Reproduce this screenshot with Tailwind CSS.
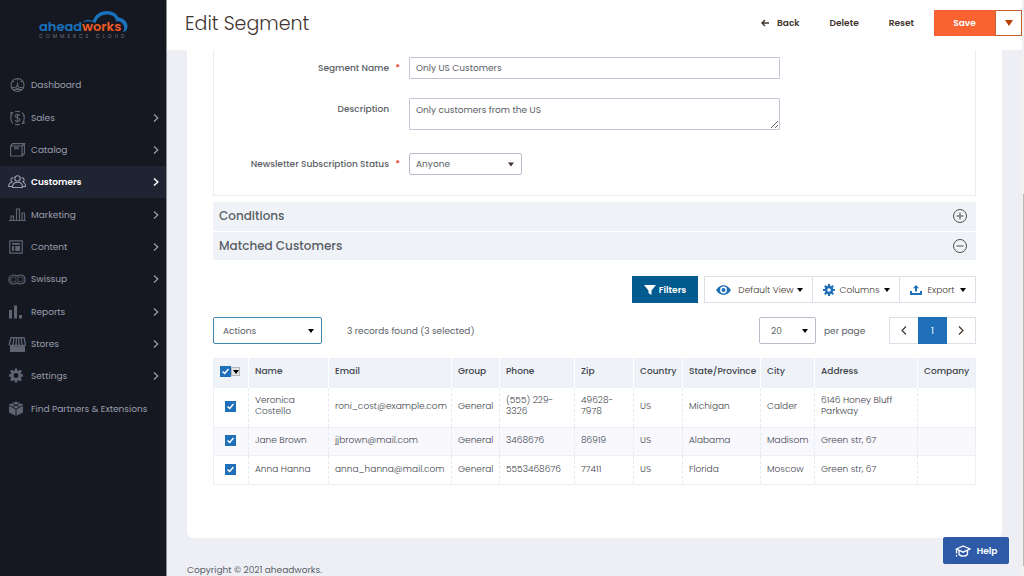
<!DOCTYPE html>
<html lang="en">

<head>
    <meta charset="UTF-8">
    <meta name="viewport" content="width=device-width, initial-scale=1.0">
    <title>Edit Segment</title>
    <script src="https://cdn.jsdelivr.net/npm/@tailwindcss/browser@4"></script>
</head>

<body class="bg-[#eeeff5] font-['Poppins','Inter',sans-serif] text-[9px] leading-[12px] text-[#5a5e66]">
    <div class="flex h-screen overflow-hidden">

        <!-- Sidebar -->
        <aside class="w-[167px] shrink-0 border-r border-[#8b8d94] bg-[#151820] text-[#9a9eae]">
            <a href="#" class="relative block h-[69px] pl-[39px] pt-[20px]" aria-label="aheadworks commerce cloud">
                <svg class="absolute left-[82px] top-[10px]" width="46" height="24" viewBox="0 0 46 24" fill="#1a72bd">
                    <path d="M1 12C3 9.500 8 9.500 11 11C13 4 19 1 25 1C31 1 35 4 36.500 7.500C41.500 8 45.500 12 45.500 16C45.500 19 43.500 22 41 22C43.500 18 42 13 37.500 11.500C36.500 11 35.500 11 34 11.500C34 7 30 4.500 25 4.500C19 4.500 15 8 13.500 13C10 11 5 10.800 1 12Z" />
                </svg>
                <span class="block text-[13px] leading-[14px] font-semibold text-[#1a72bd]">ahead<span class="text-[#ee5a24]">works</span></span>
                <span class="block text-[5px] leading-[6px] tracking-[3px] text-[#6b7180]">COMMERCE CLOUD</span>
            </a>
            <nav class="grid h-[356px] auto-rows-fr">
                <a href="#" class="flex items-center gap-[5px] pl-[8px] pr-[7px]">
                    <svg class="w-[18px]" width="18" height="16" viewBox="0 0 18 16" fill="none" stroke="#5f6473" stroke-width="1.200">
                        <circle cx="9.500" cy="8" r="6.500" />
                        <path d="M3.500 10.500H7M12 10.500H15.500M9.500 2V3.500M5 4L6 5M14 4L13 5M9.500 5.500V9" />
                        <circle cx="9.500" cy="10.500" r="1.600" />
                        <path d="M5 12.500H14" />
                    </svg>
                    <span class="flex-1">Dashboard</span>
                </a>
                <a href="#" class="flex items-center gap-[5px] pl-[8px] pr-[7px]">
                    <svg class="w-[18px]" width="18" height="16" viewBox="0 0 18 16" fill="none" stroke="#5f6473" stroke-width="1.200">
                        <path d="M5 2.500C2 5 2 11 5 13.500M14 2.500C17 5 17 11 14 13.500M7 1.800C8.500 1.200 10.500 1.200 12 1.800M7 14.200C8.500 14.800 10.500 14.800 12 14.200" />
                        <path d="M12 5.500C11 4.300 7.200 4.300 7.200 6.300C7.200 8.500 12 7.500 12 9.700C12 11.700 8 11.700 7 10.300M9.500 3.500V12.500" />
                        <path d="M3 4.500V2.500H5M16 11.500V13.500H14" />
                    </svg>
                    <span class="flex-1">Sales</span>
                    <svg width="6" height="8" viewBox="0 0 6 8" fill="none" stroke="currentColor" stroke-width="1.200"><path d="M1 0.500L4.800 4L1 7.500" /></svg>
                </a>
                <a href="#" class="flex items-center gap-[5px] pl-[8px] pr-[7px]">
                    <svg class="w-[18px]" width="18" height="16" viewBox="0 0 18 16" fill="none" stroke="#5f6473" stroke-width="1.200">
                        <path d="M2.600 4H14V14H2.600ZM2.600 4L4.500 1.700H16.400L14 4M16.400 1.700V11.500L14 14" />
                        <path d="M7 4V7L8.500 6L10 7V4" />
                    </svg>
                    <span class="flex-1">Catalog</span>
                    <svg width="6" height="8" viewBox="0 0 6 8" fill="none" stroke="currentColor" stroke-width="1.200"><path d="M1 0.500L4.800 4L1 7.500" /></svg>
                </a>
                <a href="#" class="flex items-center gap-[5px] bg-[#1f2432] pl-[8px] pr-[7px] font-semibold text-white" aria-current="page">
                    <svg class="w-[18px]" width="18" height="16" viewBox="0 0 18 16" fill="none" stroke="#9a9eae" stroke-width="1.100">
                        <circle cx="9.500" cy="4.500" r="2.700" />
                        <path d="M4.500 13.500C4.500 9.500 6 8.300 9.500 8.300C13 8.300 14.500 9.500 14.500 13.500Z" />
                        <path d="M5.500 4C3.500 3.500 2.500 5 3 6.500C3.200 7.300 3.800 7.800 4.500 8M13.500 4C15.500 3.500 16.500 5 16 6.500C15.800 7.300 15.200 7.800 14.500 8" />
                        <path d="M4.500 12.500H0.700C0.700 10 1.500 8.500 4 8.500M14.500 12.500H17.600C17.600 10 17 8.500 15 8.500" />
                    </svg>
                    <span class="flex-1">Customers</span>
                    <svg width="6" height="8" viewBox="0 0 6 8" fill="none" stroke="currentColor" stroke-width="1.500"><path d="M1 0.500L4.800 4L1 7.500" /></svg>
                </a>
                <a href="#" class="flex items-center gap-[5px] pl-[8px] pr-[7px]">
                    <svg class="w-[18px]" width="18" height="16" viewBox="0 0 18 16" fill="none" stroke="#5f6473" stroke-width="1.200">
                        <path d="M1 13.500H18M3 13.500V9H5.500V13.500M8.500 13.500V2H11.500V13.500M14 13.500V6H16.500V13.500" />
                    </svg>
                    <span class="flex-1">Marketing</span>
                    <svg width="6" height="8" viewBox="0 0 6 8" fill="none" stroke="currentColor" stroke-width="1.200"><path d="M1 0.500L4.800 4L1 7.500" /></svg>
                </a>
                <a href="#" class="flex items-center gap-[5px] pl-[8px] pr-[7px]">
                    <svg class="w-[18px]" width="18" height="16" viewBox="0 0 18 16" fill="#5f6473">
                        <path fill="none" stroke="#5f6473" stroke-width="1.200" d="M1.800 1.800H14.200V14.200H1.800Z" />
                        <path d="M4 4H12V5.800H4ZM4 7H6V12H4ZM7.200 7H12V12H7.200Z" />
                    </svg>
                    <span class="flex-1">Content</span>
                    <svg width="6" height="8" viewBox="0 0 6 8" fill="none" stroke="currentColor" stroke-width="1.200"><path d="M1 0.500L4.800 4L1 7.500" /></svg>
                </a>
                <a href="#" class="flex items-center gap-[5px] pl-[8px] pr-[7px]">
                    <svg class="w-[18px]" width="18" height="16" viewBox="0 0 18 16" fill="none" stroke="#5f6473" stroke-width="1.200">
                        <path d="M5.500 4C7 4 8 4.500 9 5.300C10 4.500 11 4 12.500 4C18.500 4 18.500 13 12.500 13C11 13 10 12.500 9 11.700C8 12.500 7 13 5.500 13C-0.500 13 -0.500 4 5.500 4Z" />
                        <circle cx="5.500" cy="8.500" r="2.600" stroke="#3d4250" />
                        <circle cx="12.500" cy="8.500" r="2.600" stroke="#3d4250" />
                    </svg>
                    <span class="flex-1">Swissup</span>
                    <svg width="6" height="8" viewBox="0 0 6 8" fill="none" stroke="currentColor" stroke-width="1.200"><path d="M1 0.500L4.800 4L1 7.500" /></svg>
                </a>
                <a href="#" class="flex items-center gap-[5px] pl-[8px] pr-[7px]">
                    <svg class="w-[18px]" width="18" height="16" viewBox="0 0 18 16" fill="#5f6473">
                        <path d="M1 6H4V14.500H1ZM6 1.500H9V14.500H6ZM11 11H14V14.500H11Z" />
                    </svg>
                    <span class="flex-1">Reports</span>
                    <svg width="6" height="8" viewBox="0 0 6 8" fill="none" stroke="currentColor" stroke-width="1.200"><path d="M1 0.500L4.800 4L1 7.500" /></svg>
                </a>
                <a href="#" class="flex items-center gap-[5px] pl-[8px] pr-[7px]">
                    <svg class="w-[18px]" width="18" height="16" viewBox="0 0 18 16" fill="#5f6473">
                        <path d="M2 9.500C4 10.500 15 10.500 17 9.500V16H2Z" />
                        <path fill="none" stroke="#5f6473" stroke-width="1.300" d="M3 1.600H16L17.500 8.500C17 10 14.500 10 14 8.500C13.500 10 11.500 10 11 8.500C10.500 10 8.500 10 8 8.500C7.500 10 5.500 10 5 8.500C4.500 10 2 10 1.200 8.500ZM6 1.600L5 8.500M8.500 1.600L8 8.500M10.700 1.600L11 8.500M13.200 1.600L14 8.500" />
                    </svg>
                    <span class="flex-1">Stores</span>
                    <svg width="6" height="8" viewBox="0 0 6 8" fill="none" stroke="currentColor" stroke-width="1.200"><path d="M1 0.500L4.800 4L1 7.500" /></svg>
                </a>
                <a href="#" class="flex items-center gap-[5px] pl-[8px] pr-[7px]">
                    <svg class="w-[18px]" width="18" height="16" viewBox="0 0 18 16" fill="none" stroke="#5f6473">
                        <circle cx="8" cy="7.500" r="3.900" stroke-width="2.800" />
                        <path stroke-width="2.600" d="M8 0.500V3M8 12V14.500M1 7.500H3.500M12.500 7.500H15M3 2.500L5 4.500M11 10.500L13 12.500M3 12.500L5 10.500M11 4.500L13 2.500" />
                    </svg>
                    <span class="flex-1">Settings</span>
                    <svg width="6" height="8" viewBox="0 0 6 8" fill="none" stroke="currentColor" stroke-width="1.200"><path d="M1 0.500L4.800 4L1 7.500" /></svg>
                </a>
                <a href="#" class="flex items-center gap-[5px] pl-[8px] pr-[7px]">
                    <svg class="w-[18px]" width="18" height="16" viewBox="0 0 18 16" fill="#5f6473">
                        <path d="M8 0.500L15 3.500V11.500L8 15L1 11.500V3.500Z" />
                        <path fill="none" stroke="#151820" stroke-width="0.900" d="M1 4.500L8 8L15 4.500M8 8V15M4.500 2.500L11.500 6M11.500 2.500L4.500 6" />
                    </svg>
                    <span class="flex-1 whitespace-nowrap">Find Partners &amp; Extensions</span>
                </a>
            </nav>
        </aside>

        <div class="flex min-w-0 flex-1 flex-col">
            <!-- Page actions -->
            <header class="flex h-[50px] shrink-0 items-start bg-white pl-[18px] pt-[10px]">
                <h1 class="flex-1 text-[19px] leading-[28px] font-light text-[#41362f]">Edit Segment</h1>
                <div class="flex h-[26px] items-center font-semibold text-[#41362f]">
                    <button class="mr-[30px] flex items-center gap-[8px]">
                        <svg width="8" height="8" viewBox="0 0 8 8" fill="none" stroke="currentColor" stroke-width="1.400"><path d="M8 4H1M4 1L1 4L4 7" /></svg>
                        Back
                    </button>
                    <button class="mr-[30px]">Delete</button>
                    <button class="mr-[20px]">Reset</button>
                    <button class="h-[26px] w-[61px] bg-[#f96332] text-white">Save</button>
                    <button class="flex h-[26px] w-[27px] items-center justify-center border border-[#c4612f] text-[#b84002]" aria-label="More save options">
                        <svg width="8" height="6" viewBox="0 0 8 6" fill="currentColor"><path d="M0 0H8L4 6Z" /></svg>
                    </button>
                </div>
            </header>

            <main class="min-h-0 flex-1 pl-[20px] pr-[20px]">
                <div class="h-[488px] rounded-b-[6px] bg-white px-[26px]">
                    <form class="grid grid-cols-[175px_371px] gap-x-[20px] border-x border-b border-[#ececf0] pb-[20px] pt-[7px]">
                        <label for="name" class="relative self-center text-right font-medium">Segment Name <span class="absolute -right-[11px] text-[#e22626]">*</span></label>
                        <input id="name" type="text" value="Only US Customers" class="h-[22px] rounded-[1px] border border-[#c5c6d3] px-[6px]">

                        <label for="description" class="mt-[24px] text-right font-medium">Description</label>
                        <textarea id="description" class="mt-[19px] h-[32px] rounded-[1px] border border-[#c5c6d3] px-[6px] py-[5px]">Only customers from the US</textarea>

                        <label for="status" class="relative mt-[28px] text-right font-medium">Newsletter Subscription Status <span class="absolute -right-[11px] text-[#e22626]">*</span></label>
                        <div class="relative mt-[23px] w-[113px]">
                            <select id="status" class="h-[22px] w-full appearance-none rounded-[2px] border border-[#b9bbc9] px-[6px]">
                                <option>Anyone</option>
                            </select>
                            <svg class="absolute right-[8px] top-[9px]" width="6" height="5" viewBox="0 0 6 5" fill="#41362f"><path d="M0 0.500H6L3 4.500Z" /></svg>
                        </div>
                    </form>

                    <div class="mt-[6px] grid gap-px text-[12px] font-medium">
                        <button class="flex h-[29px] items-center justify-between bg-[#eff3f8] pb-[2px] pl-[6px] pr-[8px]">
                            Conditions
                            <svg width="16" height="16" viewBox="0 0 16 16" fill="none" stroke="#514943"><circle cx="8" cy="8" r="6.500" /><path d="M8 4.500V11.500M4.500 8H11.500" /></svg>
                        </button>
                        <button class="flex h-[28px] items-center justify-between bg-[#eff3f8] pl-[6px] pr-[8px]">
                            Matched Customers
                            <svg width="16" height="16" viewBox="0 0 16 16" fill="none" stroke="#514943"><circle cx="8" cy="8" r="6.500" /><path d="M4.500 8H11.500" /></svg>
                        </button>
                    </div>

                    <!-- Grid toolbar -->
                    <div class="mt-[16px] flex justify-end gap-[6px]">
                        <button class="flex h-[27px] w-[66px] items-center justify-center gap-[3px] bg-[#025b8f] font-semibold text-white">
                            <svg width="12" height="10" viewBox="0 0 12 10" fill="currentColor"><path d="M0 0H12L7.500 5.500V10L4.500 8V5.500Z" /></svg>
                            Filters
                        </button>
                        <div class="flex h-[27px] divide-x divide-[#dcdfe8] border border-[#dcdfe8] font-light text-[#41362f]">
                            <button class="flex w-[108px] items-center justify-between pl-[11px] pr-[9px]">
                                <svg width="15" height="10" viewBox="0 0 15 10" fill="#1f70b8"><path fill-rule="evenodd" d="M0 5C4 -1.500 11 -1.500 15 5C11 11.500 4 11.500 0 5ZM7.500 1.600A3.400 3.400 0 1 0 7.500 8.400A3.400 3.400 0 1 0 7.500 1.600Z" /><circle cx="7.500" cy="5" r="2" /></svg>
                                <span class="ml-[4px]">Default View</span>
                                <svg width="6" height="4" viewBox="0 0 6 4" fill="#000"><path d="M0 0H6L3 4Z" /></svg>
                            </button>
                            <button class="flex w-[87px] items-center justify-between pl-[10px] pr-[9px]">
                                <svg width="12" height="12" viewBox="0 0 12 12" fill="none" stroke="#1f70b8"><circle cx="6" cy="6" r="3" stroke-width="2.400" /><path stroke-width="2.200" d="M6 0V2.500M6 9.500V12M0 6H2.500M9.500 6H12M1.800 1.800L3.500 3.500M8.500 8.500L10.200 10.200M1.800 10.200L3.500 8.500M8.500 3.500L10.200 1.800" /></svg>
                                <span>Columns</span>
                                <svg width="6" height="4" viewBox="0 0 6 4" fill="#000"><path d="M0 0H6L3 4Z" /></svg>
                            </button>
                            <button class="flex w-[75px] items-center justify-between pl-[10px] pr-[9px]">
                                <svg width="12" height="10" viewBox="0 0 12 10" fill="#1f70b8"><path d="M6 0L9 3.200H7V6.500H5V3.200H3ZM0 6H2V8H10V6H12V10H0Z" /></svg>
                                <span>Export</span>
                                <svg width="6" height="4" viewBox="0 0 6 4" fill="#000"><path d="M0 0H6L3 4Z" /></svg>
                            </button>
                        </div>
                    </div>

                    <div class="mt-[14px] flex h-[27px] items-center">
                        <div class="relative w-[109px]">
                            <select aria-label="Actions" class="block h-[27px] w-full appearance-none rounded-[2px] border border-[#3f87ad] px-[9px]">
                                <option>Actions</option>
                            </select>
                            <svg class="absolute right-[8px] top-[12px]" width="6" height="4" viewBox="0 0 6 4" fill="#000"><path d="M0 0H6L3 4Z" /></svg>
                        </div>
                        <p class="ml-[25px] flex-1">3 records found (3 selected)</p>
                        <div class="relative w-[57px]">
                            <select id="limit" class="block h-[27px] w-full appearance-none rounded-[2px] border border-[#b9bbc9] px-[11px]">
                                <option>20</option>
                            </select>
                            <svg class="absolute right-[8px] top-[12px]" width="6" height="4" viewBox="0 0 6 4" fill="#000"><path d="M0 0H6L3 4Z" /></svg>
                        </div>
                        <label for="limit" class="ml-[8px] w-[65px]">per page</label>
                        <div class="flex h-[27px] w-[87px] border border-[#dcdfe8]">
                            <button class="flex flex-1 items-center justify-center" aria-label="Previous page">
                                <svg width="6" height="9" viewBox="0 0 6 9" fill="none" stroke="#41362f" stroke-width="1.200"><path d="M5 0.500L1 4.500L5 8.500" /></svg>
                            </button>
                            <button class="-my-px w-[29px] bg-[#1f70b8] text-white">1</button>
                            <button class="flex flex-1 items-center justify-center" aria-label="Next page">
                                <svg width="6" height="9" viewBox="0 0 6 9" fill="none" stroke="#41362f" stroke-width="1.200"><path d="M1 0.500L5 4.500L1 8.500" /></svg>
                            </button>
                        </div>
                    </div>

                    <table class="mt-[14px] w-full table-fixed border border-[#eaf0f6] text-left leading-[11px]">
                        <colgroup>
                            <col class="w-[35px]">
                            <col class="w-[80px]">
                            <col class="w-[123px]">
                            <col class="w-[48px]">
                            <col class="w-[75px]">
                            <col class="w-[59px]">
                            <col class="w-[49px]">
                            <col class="w-[78px]">
                            <col class="w-[54px]">
                            <col class="w-[103px]">
                            <col>
                        </colgroup>
                        <thead class="bg-[#eff3f8] text-[#41454d]">
                            <tr class="h-[29px] divide-x divide-white *:px-[6px] *:pb-[3px] *:font-medium">
                                <th>
                                    <div class="flex items-center">
                                        <span class="relative">
                                            <input type="checkbox" checked aria-label="Select all" class="block size-[11px] appearance-none bg-[#1f70b8]">
                                            <svg class="pointer-events-none absolute left-[2px] top-[2px]" width="7" height="7" viewBox="0 0 7 7" fill="none" stroke="#fff" stroke-width="1.500"><path d="M0.500 3.500L2.700 5.500L6.500 1" /></svg>
                                        </span>
                                        <button class="flex h-[9px] w-[9px] items-center justify-center border border-[#b5b5b5] bg-[#e3e3e3]" aria-label="Selection options">
                                            <svg width="6" height="4" viewBox="0 0 6 4" fill="#000"><path d="M0 0H6L3 4Z" /></svg>
                                        </button>
                                    </div>
                                </th>
                                <th>Name</th>
                                <th>Email</th>
                                <th>Group</th>
                                <th>Phone</th>
                                <th>Zip</th>
                                <th>Country</th>
                                <th class="whitespace-nowrap">State/Province</th>
                                <th>City</th>
                                <th>Address</th>
                                <th>Company</th>
                            </tr>
                        </thead>
                        <tbody class="divide-y divide-[#eaf0f6] font-light text-[#41454d] *:divide-x *:divide-dashed *:divide-[#e3eaf3]">
                            <tr class="h-[40px] *:px-[6px] *:pb-[2px]">
                                <td>
                                    <span class="relative mx-auto block w-[12px]">
                                        <input type="checkbox" checked aria-label="Select Veronica Costello" class="block size-[11px] appearance-none bg-[#1f70b8]">
                                        <svg class="pointer-events-none absolute left-[2px] top-[2px]" width="7" height="7" viewBox="0 0 7 7" fill="none" stroke="#fff" stroke-width="1.500"><path d="M0.500 3.500L2.700 5.500L6.500 1" /></svg>
                                    </span>
                                </td>
                                <td>Veronica<br>Costello</td>
                                <td>roni_cost@example.com</td>
                                <td>General</td>
                                <td>(555) 229-<br>3326</td>
                                <td>49628-<br>7978</td>
                                <td>US</td>
                                <td>Michigan</td>
                                <td>Calder</td>
                                <td>6146 Honey Bluff<br>Parkway</td>
                                <td></td>
                            </tr>
                            <tr class="h-[28px] bg-[#f8f8fd] *:px-[6px] *:pb-[2px]">
                                <td>
                                    <span class="relative mx-auto block w-[12px]">
                                        <input type="checkbox" checked aria-label="Select Jane Brown" class="block size-[11px] appearance-none bg-[#1f70b8]">
                                        <svg class="pointer-events-none absolute left-[2px] top-[2px]" width="7" height="7" viewBox="0 0 7 7" fill="none" stroke="#fff" stroke-width="1.500"><path d="M0.500 3.500L2.700 5.500L6.500 1" /></svg>
                                    </span>
                                </td>
                                <td>Jane Brown</td>
                                <td>jjbrown@mail.com</td>
                                <td>General</td>
                                <td>3468676</td>
                                <td>86919</td>
                                <td>US</td>
                                <td>Alabama</td>
                                <td>Madisom</td>
                                <td>Green str, 67</td>
                                <td></td>
                            </tr>
                            <tr class="h-[29px] *:px-[6px] *:pb-[2px]">
                                <td>
                                    <span class="relative mx-auto block w-[12px]">
                                        <input type="checkbox" checked aria-label="Select Anna Hanna" class="block size-[11px] appearance-none bg-[#1f70b8]">
                                        <svg class="pointer-events-none absolute left-[2px] top-[2px]" width="7" height="7" viewBox="0 0 7 7" fill="none" stroke="#fff" stroke-width="1.500"><path d="M0.500 3.500L2.700 5.500L6.500 1" /></svg>
                                    </span>
                                </td>
                                <td>Anna Hanna</td>
                                <td>anna_hanna@mail.com</td>
                                <td>General</td>
                                <td>5553468676</td>
                                <td>77411</td>
                                <td>US</td>
                                <td>Florida</td>
                                <td>Moscow</td>
                                <td>Green str, 67</td>
                                <td></td>
                            </tr>
                        </tbody>
                    </table>
                </div>
                <footer class="pt-[26px]">Copyright © 2021 aheadworks.</footer>
            </main>
        </div>

        <!-- Scroll track -->
        <div class="flex w-[2px] flex-col bg-[#f1f1f1] pb-[10px] pt-[194px]">
            <div class="ml-px flex-1 bg-[#b9b9b9]"></div>
        </div>
    </div>

    <button class="fixed bottom-[12px] right-[15px] flex h-[27px] w-[66px] items-center justify-center gap-[6px] rounded-[2px] bg-[#2f5aa8] font-semibold text-white">
        <svg width="16" height="12" viewBox="0 0 16 12" fill="none" stroke="currentColor" stroke-width="1.300">
            <path d="M1.500 4L8 1L15 4L8 7.200Z" />
            <path d="M4 5.500V9.500C6 11.700 10.500 11.700 12.500 9.500V5.500M1.500 4V8.500" />
            <path d="M1.500 10V11.500" />
        </svg>
        Help
    </button>
</body>

</html>
